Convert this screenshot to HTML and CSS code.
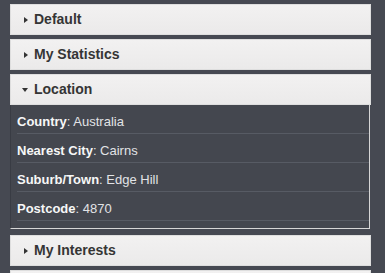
FILE: index.html
```html
<!DOCTYPE html>
<html lang="en">
<head>
    <meta charset="UTF-8">
    <title>Profile</title>
    <link rel="stylesheet" href="styles.css">
</head>
<body>
<div class="set">
    <div class="block">
        <h3 class="block-head"><span class="arrow"></span>Default</h3>
    </div>
    <div class="block">
        <h3 class="block-head"><span class="arrow"></span>My Statistics</h3>
    </div>
    <div class="block open">
        <h3 class="block-head"><span class="arrow"></span>Location</h3>
        <ul class="block-content">
            <li><b>Country</b>: Australia</li>
            <li><b>Nearest City</b>: Cairns</li>
            <li><b>Suburb/Town</b>: Edge Hill</li>
            <li><b>Postcode</b>: 4870</li>
        </ul>
    </div>
    <div class="block">
        <h3 class="block-head"><span class="arrow"></span>My Interests</h3>
    </div>
    <div class="block">
        <div class="block-head"></div>
    </div>
</div>
</body>
</html>
```
FILE: styles.css
```css
*{margin: 0px;padding: 0px;}
body{
    background: #464952;
    font-family: "Liberation Sans", Arial, sans-serif;
    overflow: hidden;
}
.set{
    padding: 4px 14px 0 10px;
}
.block{
    margin-bottom: 4px;
}
.block.open{
    margin-bottom: 6px;
}
.block-head{
    height: 29px;
    line-height: 29px;
    border: 1px solid #dedede;
    background: linear-gradient(#f2f1f1, #ebeaea);
    color: #353535;
    font-size: 14px;
    font-weight: bold;
    display: flex;
    align-items: center;
    padding-left: 13px;
}
.arrow{
    width: 0;
    height: 0;
    border-top: 3px solid transparent;
    border-bottom: 3px solid transparent;
    border-left: 4px solid #333;
    margin-right: 6px;
}
.open .arrow{
    border-left: 3px solid transparent;
    border-right: 3px solid transparent;
    border-top: 4px solid #333;
    border-bottom: 0;
    margin-left: -2px;
    margin-right: 6px;
}
.block-content{
    list-style: none;
    background: #44474f;
    border-left: 1px solid #393c44;
    border-right: 1px solid #d6d6d6;
    border-bottom: 1px solid #d6d6d6;
    margin-right: 1px;
    padding: 0 0 7px 6px;
}
.block-content li{
    font-size: 13px;
    line-height: 16px;
    color: #e2e3e6;
    padding: 9px 0 3px 0;
    border-bottom: 1px solid #575b64;
}
.block-content li b{
    color: #f7f7f7;
}
```
